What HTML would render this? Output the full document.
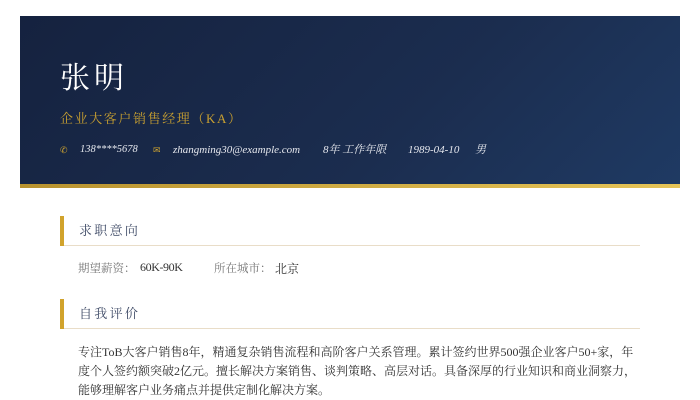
<!DOCTYPE html>
<html><head><meta charset="utf-8"><style>
*{margin:0;padding:0;box-sizing:border-box}
body{width:700px;height:400px;background:#fff;font-family:"Liberation Serif","Noto Serif CJK SC",serif;position:relative;overflow:hidden}
.hd{position:absolute;left:20px;top:16px;width:660px;height:168px;background:linear-gradient(135deg,#15223f 0%,#1b2d4f 60%,#1f3a63 100%)}
.gb{position:absolute;left:20px;top:184px;width:660px;height:4px;background:linear-gradient(90deg,#b8922e,#e6c457)}
.name{position:absolute;left:60px;top:59px;color:#fff;font-size:30px;letter-spacing:4px;line-height:40px}
.title{position:absolute;left:60px;top:108px;color:#c9a030;font-size:13px;letter-spacing:1.6px}
.ct{position:absolute;top:142px;height:16px;line-height:16px;color:#e6e8ee;font-size:11px;font-style:italic;white-space:nowrap}
.ic{color:#c9a030;font-style:normal;font-size:9px}
.sec{position:absolute;left:60px;width:580px;height:30px;border-bottom:1px solid #e9ddc8}
.sec:before{content:"";position:absolute;left:0;top:0;width:4px;height:30px;background:#d1a32c}
.sec span{position:absolute;left:19px;top:4px;font-size:13px;color:#3e4a66;letter-spacing:2.3px}
.row{position:absolute;top:260px;font-size:11.5px;color:#777;white-space:nowrap}
.row b{font-weight:normal;color:#333;font-size:12px}
.p{position:absolute;left:78px;top:343px;font-size:12px;line-height:19px;color:#333;white-space:nowrap}
</style></head><body>
<div class="hd"></div><div class="gb"></div>
<div class="name">张明</div>
<div class="title">企业大客户销售经理（KA）</div>
<div class="ct" style="left:60px"><span class="ic">✆</span></div>
<div class="ct" style="left:80px;font-size:10.5px">138****5678</div>
<div class="ct" style="left:153px"><span class="ic">✉</span></div>
<div class="ct" style="left:173px">zhangming30@example.com</div>
<div class="ct" style="left:323px">8年 工作年限</div>
<div class="ct" style="left:408px">1989-04-10</div>
<div class="ct" style="left:475px">男</div>
<div class="sec" style="top:216px"><span>求职意向</span></div>
<div class="row" style="left:78px">期望薪资：</div>
<div class="row" style="left:140px"><b style="letter-spacing:-0.4px">60K-90K</b></div>
<div class="row" style="left:214px">所在城市：</div>
<div class="row" style="left:275px"><b>北京</b></div>
<div class="sec" style="top:299px"><span>自我评价</span></div>
<div class="p">专注ToB大客户销售8年，精通复杂销售流程和高阶客户关系管理。累计签约世界500强企业客户50+家，年<br>度个人签约额突破2亿元。擅长解决方案销售、谈判策略、高层对话。具备深厚的行业知识和商业洞察力，<br>能够理解客户业务痛点并提供定制化解决方案。</div>
</body></html>
